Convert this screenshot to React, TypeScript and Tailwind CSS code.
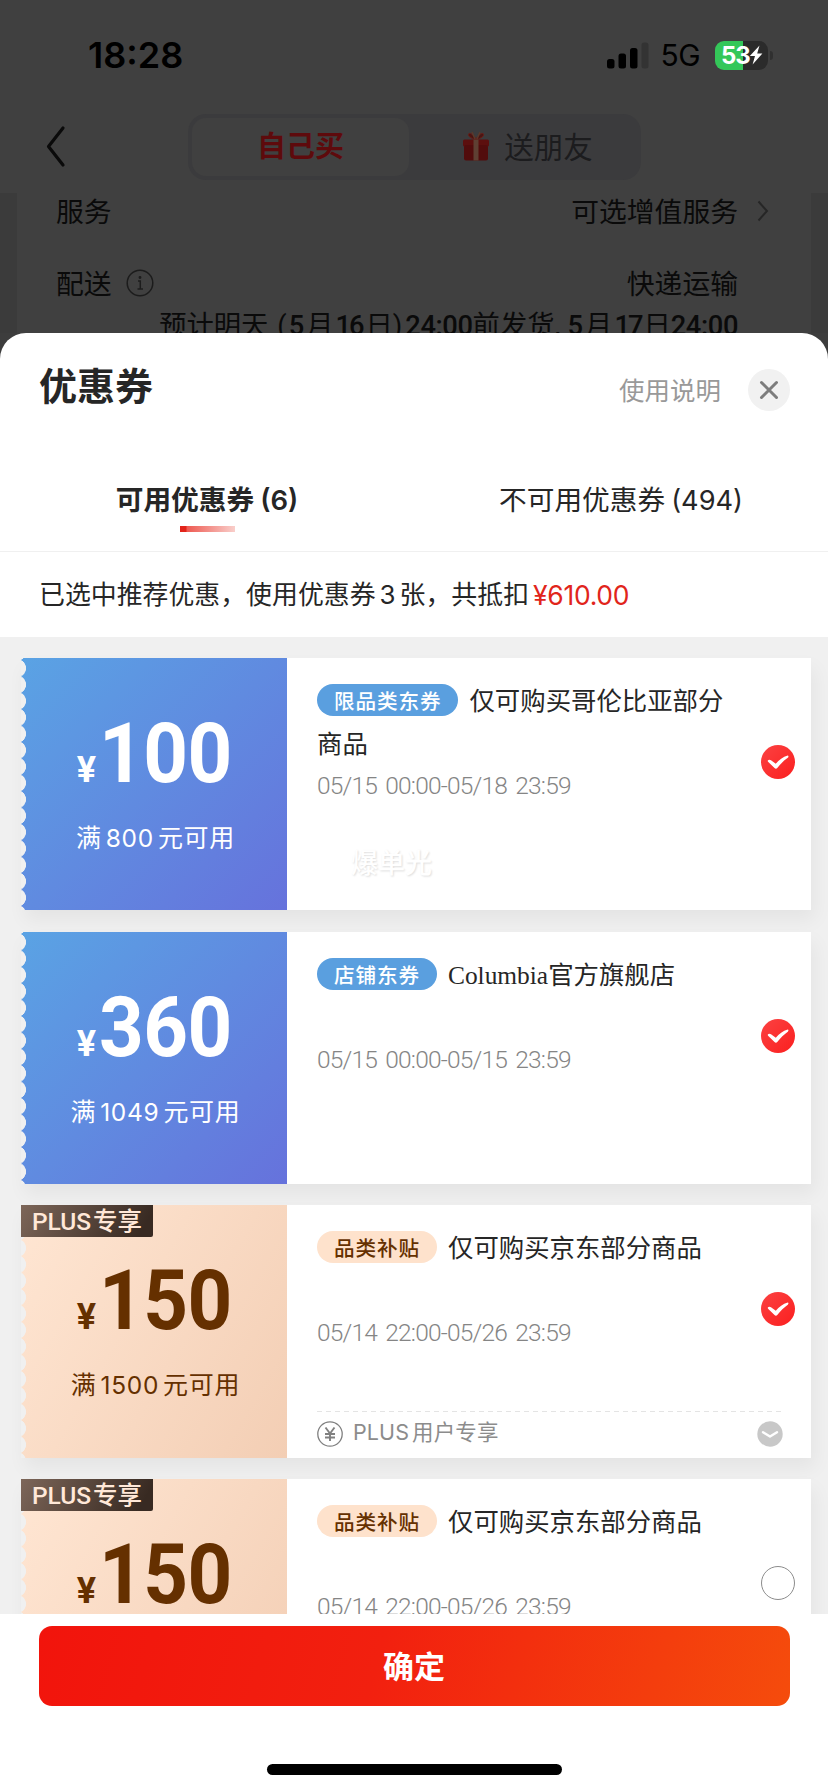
import React from 'react';

const SANS = "font-['Inter','Noto_Sans_CJK_SC',sans-serif]";
const DIGITS = "font-['Roboto','Noto_Sans_CJK_SC',sans-serif]";

type Coupon = {
  kind: 'blue' | 'plus';
  amount: string;
  threshold: string;
  tag: string;
  latin?: string;
  title: string;
  date: string;
  checked: boolean;
  watermark?: string;
};

const coupons: Coupon[] = [
  { kind: 'blue', amount: '100', threshold: '800', tag: '限品类东券', title: '仅可购买哥伦比亚部分商品', date: '05/15 00:00-05/18 23:59', checked: true, watermark: '爆单光' },
  { kind: 'blue', amount: '360', threshold: '1049', tag: '店铺东券', latin: 'Columbia', title: '官方旗舰店', date: '05/15 00:00-05/15 23:59', checked: true },
  { kind: 'plus', amount: '150', threshold: '1500', tag: '品类补贴', title: '仅可购买京东部分商品', date: '05/14 22:00-05/26 23:59', checked: true },
  { kind: 'plus', amount: '150', threshold: '1500', tag: '品类补贴', title: '仅可购买京东部分商品', date: '05/14 22:00-05/26 23:59', checked: false },
];

function Battery() {
  return (
    <div className="flex items-center">
      <div className="flex h-[29px] w-[53px] items-center overflow-hidden rounded-[9px] bg-[linear-gradient(90deg,#34c759_53%,#2b2b2b_53%)] pl-[6px]">
        <span className="font-['Inter'] text-[24px] font-bold leading-[29px] tracking-[-1px] text-white">53</span>
        <svg viewBox="0 0 14 20" className="-ml-[1px] h-[20px] w-[14px]" fill="#fff">
          <path d="M10.5 0.5 L0.8 11 H6 L3.6 19.5 L13.4 8.4 H8.2 Z" />
        </svg>
      </div>
      <div className="ml-[2px] h-[9px] w-[3px] rounded-r-full bg-[#303030]" />
    </div>
  );
}

function StatusBar() {
  return (
    <div className="flex h-[107px] items-start justify-between pl-[88px] pr-[55px] pt-[34px]">
      <span className="font-['Inter'] text-[36px] font-semibold leading-[42px] text-black">18:28</span>
      <div className="flex items-center pt-[6px]">
        <svg viewBox="0 0 42 28" className="h-[28px] w-[42px]">
          <rect x="0" y="18" width="7.500" height="9.500" rx="2.5" fill="#000" />
          <rect x="11.5" y="12.500" width="7.500" height="15" rx="2.5" fill="#000" />
          <rect x="23" y="7" width="7.500" height="20.500" rx="2.5" fill="#000" />
          <rect x="34.5" y="1.500" width="7" height="26" rx="2.5" fill="#333" />
        </svg>
        <span className="ml-[12px] mr-[15px] font-['Inter'] text-[30px] leading-[30px] tracking-[-0.6px] text-black">5G</span>
        <Battery />
      </div>
    </div>
  );
}

function Gift() {
  return (
    <svg viewBox="0 0 28 30" className="h-[30px] w-[28px]">
      <path d="M14 9 C9 7 5 5 7 2.5 C9.5 2 12 5 14 8 C16 5 18.5 2 21 2.5 C23 5 19 7 14 9Z" fill="#4a1512" stroke="#6b1b16" strokeWidth="1" />
      <path d="M13 8 L10 1 M15 8 L18 1" stroke="#5a3a2c" strokeWidth="1.5" />
      <rect x="1" y="8.5" width="26" height="7" rx="1.5" fill="#5c0f0e" />
      <rect x="2" y="14" width="24" height="15.5" rx="2" fill="#520c0c" />
      <rect x="11.5" y="8.5" width="5" height="21" fill="#5f4033" />
    </svg>
  );
}

function Header() {
  return (
    <div className="flex h-[86px] items-start pl-[45px] pt-[7px]">
      <svg viewBox="0 0 22 44" className="mt-[11px] h-[44px] w-[22px]" fill="none" stroke="#0a0a0a" strokeWidth="3.2" strokeLinecap="round" strokeLinejoin="round">
        <path d="M18 3 L3.5 21.5 L18 40" />
      </svg>
      <div className="ml-[121px] flex h-[66px] w-[453px] rounded-[18px] bg-[#3b3b3d] p-[4px]">
        <div className="flex w-[217px] items-center justify-center rounded-[14px] bg-[#404040] pb-[4px] text-[29px] font-bold text-[#5e0a0c]">自己买</div>
        <div className="flex flex-1 items-center justify-center gap-[14px] pb-[3px] pl-[9px] text-[29.5px] text-[#1c1c1e]">
          <Gift />
          <span>送朋友</span>
        </div>
      </div>
    </div>
  );
}

function Background() {
  return (
    <div className="h-[333px] overflow-hidden bg-[#404040]">
      <StatusBar />
      <Header />
      <div className="h-[160px] bg-[#3b3b3b] px-[17px]">
        <div className="h-full bg-[#404040] pl-[39px] pr-[73px] text-[27.8px] text-[#0a0a0a]">
          <div className="flex h-[36px] items-center">
            <span>服务</span>
            <span className="ml-auto">可选增值服务</span>
            <svg viewBox="0 0 12 22" className="-mr-[31px] ml-[19px] h-[22px] w-[12px]" fill="none" stroke="#262626" strokeWidth="2">
              <path d="M1.5 1.5 L10 11 L1.5 20.5" />
            </svg>
          </div>
          <div className="flex h-[74px] items-end">
            <div className="flex h-[40px] items-center">
              <span>配送</span>
              <svg viewBox="0 0 28 28" className="ml-[14px] h-[28px] w-[28px]" fill="none" stroke="#1c1c1c" strokeWidth="1.5">
                <circle cx="14" cy="14" r="12.8" />
                <path d="M12 12 H14.3 V20 M11.5 20 H17" />
                <circle cx="14" cy="8.5" r="0.7" fill="#1c1c1c" />
              </svg>
            </div>
            <span className="ml-auto flex h-[40px] items-center">快递运输</span>
          </div>
          <div className={`${DIGITS} mt-[3px] flex h-[40px] items-center justify-end whitespace-nowrap text-[27.3px] leading-[40px]`}>
            <span>预计明天</span>
            <span className="ml-[9px]">(</span>
            <span className="ml-[2px] font-medium">5</span>
            <span className="mx-[2px]">月</span>
            <span className="font-medium tracking-[-2px]">16</span>
            <span className="ml-[3px]">日</span>
            <span className="mr-[3px]">)</span>
            <span className="font-medium tracking-[-0.4px]">24:00</span>
            <span>前发货</span>
            <span className="mr-[7px] font-medium">,</span>
            <span className="font-medium">5</span>
            <span className="mx-[2px]">月</span>
            <span className="font-medium tracking-[-2px]">17</span>
            <span className="ml-[2px]">日</span>
            <span className="font-medium tracking-[-0.4px]">24:00</span>
          </div>
        </div>
      </div>
    </div>
  );
}

function SheetHeader() {
  return (
    <div className="flex h-[112px] shrink-0 items-start pl-[39px] pr-[38px]">
      <h1 className="mt-[28px] text-[38px] font-bold leading-[46px] text-[#262626]">优惠券</h1>
      <span className="ml-auto mt-[37px] text-[25.5px] leading-[38px] text-[#999]">使用说明</span>
      <button className="ml-[27px] mt-[36px] flex size-[42px] items-center justify-center rounded-full bg-[#f1f1f1]">
        <svg viewBox="0 0 20 20" className="size-[20px]" fill="none" stroke="#7d7d7d" strokeWidth="3" strokeLinecap="round">
          <path d="M2.5 2.5 L17.5 17.5 M17.5 2.5 L2.5 17.5" />
        </svg>
      </button>
    </div>
  );
}

function Tabs() {
  return (
    <div className={`${SANS} flex h-[107px] shrink-0 border-b border-[#f0f0f0] text-[27.7px] leading-[40px] text-[#262626]`}>
      <div className="flex w-1/2 flex-col items-center pt-[35px]">
        <div className="font-bold">
          可用优惠券<span className="ml-[6px] text-[27.5px] font-semibold">(6)</span>
        </div>
        <div className="mt-[6px] h-[6px] w-[55px] bg-[linear-gradient(90deg,#e2231a_0,#e2231a_6px,#ee5a52_7px,#f9cfcb_100%)]" />
      </div>
      <div className="flex w-1/2 flex-col items-center pt-[35px]">
        <div>
          不可用优惠券<span className="ml-[6px] text-[27.2px]">(494)</span>
        </div>
      </div>
    </div>
  );
}

function Notice() {
  return (
    <div className={`${SANS} flex h-[85px] shrink-0 items-center whitespace-nowrap pl-[39px] pt-[2px] text-[25.9px] text-[#262626]`}>
      <span>已选中推荐优惠，使用优惠券</span>
      <span className="mx-[4px]">3</span>
      <span>张，共抵扣</span>
      <span className="ml-[4px] text-[26.5px] tracking-[-0.3px] text-[#e1251b]">¥610.00</span>
    </div>
  );
}

function CheckMark({ checked }: { checked: boolean }) {
  if (!checked) return <div className="size-[34px] rounded-full border-[1.5px] border-[#8c8c8c] bg-white" />;
  return (
    <svg viewBox="0 0 34 34" className="size-[34px]">
      <defs>
        <linearGradient id="check" x1="0" y1="0" x2="1" y2="1">
          <stop offset="0" stopColor="#fb4242" />
          <stop offset="1" stopColor="#fb1f1f" />
        </linearGradient>
      </defs>
      <circle cx="17" cy="17" r="17" fill="url(#check)" />
      <path d="M6.8 15.6 C7.5 14.3 9 14.5 10 15.3 L14.8 18.7 C18 15 22 12 26.7 10.6 C27.8 10.8 27.6 12 26.8 12.8 C23 15.4 19.5 19 16.5 22.8 C15.5 24 14.3 23.9 13.5 23 L7.3 17 C6.8 16.5 6.6 16.1 6.8 15.6Z" fill="#fff" />
    </svg>
  );
}

function CouponCard({ c }: { c: Coupon }) {
  const blue = c.kind === 'blue';
  return (
    <div className="relative flex h-[252.3px] shrink-0 bg-white shadow-[4px_10px_18px_rgba(0,0,0,0.05)]">
      <div
        className={`relative flex w-[266px] flex-col items-center ${
          blue ? 'bg-[linear-gradient(135deg,#5aa3e4_0%,#6672dc_100%)] text-white' : 'bg-[linear-gradient(120deg,#ffe6d3_0%,#f3ceb4_100%)] text-[#653000]'
        }`}
      >
        <div className="absolute inset-y-0 left-0 w-[6px] bg-[radial-gradient(circle_at_-4px_50%,#f0f0f0_8.7px,transparent_9.3px)] bg-[length:6px_16.4px] bg-[position:0_2px] bg-repeat-y" />
        {!blue && (
          <div className={`${DIGITS} absolute left-0 top-0 flex h-[32px] w-[132px] items-center justify-center rounded-br-[2px] bg-[linear-gradient(120deg,#7d6659_0%,#382a22_90%)] pt-[2px] text-[24.5px] font-medium leading-[32px] text-[#ffe8d8]`}>
            PLUS<span className="ml-[2px]">专享</span>
          </div>
        )}
        <div className={`${DIGITS} mt-[47px] flex items-baseline pl-[1px] font-bold leading-[98px]`}>
          <span className="mr-[3px] text-[36px]">¥</span>
          <span className="-mr-[8px] inline-block origin-left scale-x-[0.94] text-[83px] tracking-[-0.5px]">{c.amount}</span>
        </div>
        <div className={`${SANS} mt-[1px] pl-[3px] text-[25px] leading-[36px] tracking-[0.7px]`}>
          满<span className="mx-[4px] text-[24.5px]">{c.threshold}</span>元可用
        </div>
      </div>
      <div className="flex flex-1 flex-col pl-[30px] pr-[28px] pt-[20px]">
        <div className="h-[91px] w-[415px] text-[25.4px] leading-[42.5px] text-[#262626]">
          <span
            className={`mr-[11px] inline-flex h-[32px] items-center rounded-full pl-[17px] pr-[17px] align-[1px] text-[20.6px] font-medium leading-[32px] tracking-[0.9px] ${
              blue ? 'bg-[#5a9fdf] text-white' : 'bg-[#fee2cc] text-[#653000]'
            }`}
          >
            {c.tag}
          </span>
          {c.latin && <span className="font-['Liberation_Serif',serif]">{c.latin}</span>}
          {c.title}
        </div>
        <div className="font-['Roboto'] text-[24.5px] font-light leading-[34px] tracking-[-0.8px] text-[#858585] [word-spacing:3px]">{c.date}</div>
        {c.watermark && (
          <div className="ml-[34px] mt-[39px] text-[27px] font-medium leading-[40px] text-white [text-shadow:1px_1px_2px_#dedede]">{c.watermark}</div>
        )}
        {!blue && (
          <div className={`${SANS} mt-auto flex h-[47px] items-center text-[21.5px] text-[#8c8c8c] [background-image:repeating-linear-gradient(90deg,#e4e4e4_0_5px,transparent_5px_9px)] bg-[length:100%_1px] bg-no-repeat`}>
            <svg viewBox="0 0 26 26" className="size-[26px]" fill="none" stroke="#808080">
              <circle cx="13" cy="13" r="12.2" strokeWidth="1.3" />
              <path d="M8.5 6.5 L13 12.5 L17.5 6.5 M13 12.5 V20 M8 13 H18 M8 16.5 H18" strokeWidth="1.9" />
            </svg>
            <span className="ml-[10px] pb-[4px] tracking-[0.1px]">PLUS<span className="ml-[3px]">用户专享</span></span>
            <svg viewBox="0 0 26 26" className="ml-auto size-[26px]" fill="none">
              <circle cx="13" cy="13" r="12.7" fill="#c8c8c8" />
              <path d="M6 11.2 L13 15.5 L20 11.2" stroke="#fff" strokeWidth="2.4" strokeLinecap="round" strokeLinejoin="round" />
            </svg>
          </div>
        )}
      </div>
      <div className="absolute right-[16px] top-[87px]">
        <CheckMark checked={c.checked} />
      </div>
    </div>
  );
}

export default function App() {
  return (
    <div className="flex h-[1792px] w-[828px] flex-col overflow-hidden bg-[#3d3d3d] font-['Noto_Sans_CJK_SC',sans-serif] leading-normal">
      <Background />
      <div className="flex flex-1 flex-col overflow-hidden rounded-t-[26px] bg-white">
        <SheetHeader />
        <Tabs />
        <Notice />
        <div className="flex h-[977px] shrink-0 flex-col gap-[21.4px] overflow-hidden bg-[#f0f0f0] pl-[21px] pr-[17px] pt-[21px]">
          {coupons.map((c, i) => (
            <CouponCard key={i} c={c} />
          ))}
        </div>
        <div className="flex flex-1 flex-col items-center bg-white pt-[12px]">
          <button className="flex h-[80px] w-[751px] items-center justify-center rounded-[13px] bg-[linear-gradient(105deg,#f2140c_0%,#f2200f_45%,#f54c0c_100%)] pb-[2px] text-[31px] font-bold text-white">确定</button>
          <div className="mt-[58px] h-[11px] w-[295px] rounded-full bg-black" />
        </div>
      </div>
    </div>
  );
}
